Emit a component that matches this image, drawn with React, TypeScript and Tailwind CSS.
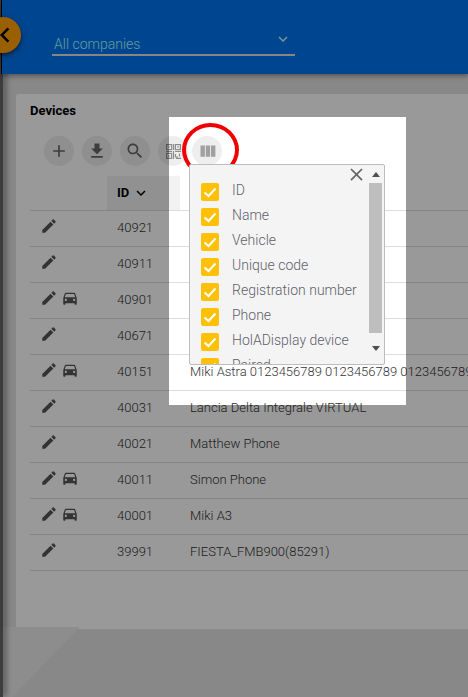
import { FC } from 'react';

interface Device {
  id: number;
  name: string;
  hasCar?: boolean;
}

const devices: Device[] = [
  { id: 40921, name: 'Test' },
  { id: 40911, name: 'Test 2' },
  { id: 40901, name: 'Panda', hasCar: true },
  { id: 40671, name: 'Phone' },
  { id: 40151, name: 'Miki Astra 0123456789 0123456789 0123456789', hasCar: true },
  { id: 40031, name: 'Lancia Delta Integrale VIRTUAL' },
  { id: 40021, name: 'Matthew Phone' },
  { id: 40011, name: 'Simon Phone', hasCar: true },
  { id: 40001, name: 'Miki A3', hasCar: true },
  { id: 39991, name: 'FIESTA_FMB900(85291)' },
];

const columns = ['ID', 'Name', 'Vehicle', 'Unique code', 'Registration number', 'Phone', 'HolADisplay device', 'Paired'];

const Icon: FC<{ d: string; className?: string }> = ({ d, className }) => (
  <svg viewBox="0 0 24 24" fill="currentColor" className={className}>
    <path d={d} />
  </svg>
);

const ICONS = {
  add: 'M19 13h-6v6h-2v-6H5v-2h6V5h2v6h6v2z',
  download: 'M19 9h-4V3H9v6H5l7 7 7-7zM5 18v2h14v-2H5z',
  search:
    'M15.5 14h-.79l-.28-.27C15.41 12.59 16 11.11 16 9.5 16 5.91 13.09 3 9.5 3S3 5.91 3 9.5 5.91 16 9.5 16c1.61 0 3.09-.59 4.23-1.57l.27.28v.79l5 4.99L20.49 19l-4.99-5zm-6 0C7.01 14 5 11.99 5 9.5S7.01 5 9.5 5 14 7.01 14 9.5 11.99 14 9.5 14z',
  column: 'M10 18h5V5h-5v13zm-6 0h5V5H4v13zM16 5v13h5V5h-5z',
  edit: 'M3 17.25V21h3.75L17.81 9.94l-3.75-3.75L3 17.25zM20.71 7.04c.39-.39.39-1.02 0-1.41l-2.34-2.34c-.39-.39-1.02-.39-1.41 0l-1.83 1.83 3.75 3.75 1.83-1.83z',
  car: 'M18.92 6.01C18.72 5.42 18.16 5 17.5 5h-11c-.66 0-1.21.42-1.42 1.01L3 12v8c0 .55.45 1 1 1h1c.55 0 1-.45 1-1v-1h12v1c0 .55.45 1 1 1h1c.55 0 1-.45 1-1v-8l-2.08-5.99zM6.5 16c-.83 0-1.5-.67-1.5-1.5S5.67 13 6.5 13s1.5.67 1.5 1.5S7.33 16 6.5 16zm11 0c-.83 0-1.5-.67-1.5-1.5s.67-1.5 1.5-1.5 1.5.67 1.5 1.5-.67 1.5-1.5 1.5zM5 11l1.5-4.5h11L19 11H5z',
  chevronDown: 'M7.41 8.59L12 13.17l4.59-4.58L18 10l-6 6-6-6 1.41-1.41z',
  chevronLeft: 'M15.41 7.41L14 6l-6 6 6 6 1.41-1.41L10.83 12z',
  close: 'M19 6.41L17.59 5 12 10.59 6.41 5 5 6.41 10.59 12 5 17.59 6.41 19 12 13.41 17.59 19 19 17.59 13.41 12z',
};

const QrIcon = () => (
  <svg viewBox="0 0 15 15" className="w-[15px] h-[15px] text-[#8c8c8c]" fill="none" stroke="currentColor" strokeWidth="1.2">
    <rect x="0.6" y="0.6" width="5" height="5" />
    <rect x="9.4" y="0.6" width="5" height="5" />
    <rect x="0.6" y="9.4" width="5" height="5" />
    <path d="M2 3h2M11 3h2M2 12h2M7.5 0v6M0 7.5h6M7.5 7v8M9 7.5h6M9.5 10v3h2.5M13.5 9.5v3M10 14.4h5" />
  </svg>
);

const ToolButton: FC<{ children: React.ReactNode; className?: string }> = ({ children, className }) => (
  <div className={`w-[30px] h-[30px] rounded-full bg-[#eeeeee] flex items-center justify-center shrink-0 ${className ?? ''}`}>
    {children}
  </div>
);

const ColumnPicker = () => (
  <div className="absolute left-[173px] top-[70px] w-[196px] h-[201px] z-10 flex bg-[#f4f4f4] border border-[#bdbdbd] rounded-[2px] overflow-hidden">
    <div className="relative flex-1 overflow-hidden pt-[18px] pl-[11px]">
      <Icon d={ICONS.close} className="absolute right-[2px] top-[-1px] w-[21px] h-[21px] text-[#666]" />
      <div className="flex flex-col gap-[7px]">
        {columns.map((c) => (
          <div key={c} className="flex items-center h-[18px]">
            <div className="w-[18px] h-[18px] rounded-[2px] bg-[#ffc107] flex items-center justify-center shrink-0">
              <svg viewBox="0 0 18 18" className="w-[18px] h-[18px]" fill="none" stroke="white" strokeWidth="2">
                <path d="M3.5 9.5 7.5 13 14.5 5.5" />
              </svg>
            </div>
            <span className="ml-[13px] -mt-[4px] text-[14px] font-light text-[#5f5f6b] whitespace-nowrap">{c}</span>
          </div>
        ))}
      </div>
    </div>
    <div className="w-[15px] flex flex-col items-center pr-[2px]">
      <div className="h-[18px] flex items-center justify-center">
        <div className="border-x-[4px] border-x-transparent border-b-[5px] border-b-[#505050]" />
      </div>
      <div className="w-full h-[150px] bg-[#bebebe]" />
      <div className="flex-1 flex items-center justify-center">
        <div className="border-x-[4px] border-x-transparent border-t-[5px] border-t-[#505050]" />
      </div>
    </div>
  </div>
);

export default function App() {
  return (
    <div className="relative w-[468px] h-[697px] overflow-hidden bg-[#e3e3e3] font-['Roboto',sans-serif] text-[#333]">
      {/* backdrop shape bottom left */}
      <svg className="absolute left-0 bottom-0 w-[90px] h-[70px]" viewBox="0 0 90 70">
        <path d="M0 70V0H80L12 70z" fill="#ebebeb" />
      </svg>
      <div className="absolute left-0 top-0 bottom-0 w-[3px] bg-[#666] shadow-[2px_0_6px_rgba(0,0,0,0.7)]" />

      <header className="relative h-[74px] bg-[#0073f0] shadow-[0_2px_5px_rgba(0,0,0,0.4)] pt-[33px] pl-[50px] ml-[1px] border-l border-black">
        <div className="w-[243px] h-[23px] border-b-2 border-[#e0e0e0] flex justify-between pl-[2px] pr-[4px] text-[14px] font-light text-[#aaffff] leading-[22px]">
          <span>All companies</span>
          <Icon d={ICONS.chevronDown} className="w-[18px] h-[18px] -mt-[3px] mr-[-1px] text-[#c8f8ff]" />
        </div>
      </header>
      <div className="absolute left-[-15px] top-[17px] w-[36px] h-[36px] rounded-full bg-[#ff9f00] shadow-[0_2px_5px_rgba(0,0,0,0.6)] flex items-center justify-end">
        <Icon d={ICONS.chevronLeft} className="w-[30px] h-[30px] mr-[1px] text-black" />
      </div>

      <main className="pt-[20px] pl-[16px]">
        <section className="h-[535px] bg-white rounded-l-[3px] pt-[9px] pl-[14px]">
          <h1 className="text-[13px] font-bold text-black leading-[16px]">Devices</h1>
          <div className="mt-[17px] pl-[14px] flex">
            <ToolButton><Icon d={ICONS.add} className="w-[20px] h-[20px] text-[#666]" /></ToolButton>
            <ToolButton className="ml-[8px]"><Icon d={ICONS.download} className="w-[20px] h-[20px] text-[#666]" /></ToolButton>
            <ToolButton className="ml-[8px]"><Icon d={ICONS.search} className="w-[20px] h-[20px] text-[#666]" /></ToolButton>
            <ToolButton className="ml-[8px]"><QrIcon /></ToolButton>
            <ToolButton className="ml-[4px]"><Icon d={ICONS.column} className="w-[21px] h-[21px] text-[#a0a0a0]" /></ToolButton>
          </div>

          <div className="mt-[10px] h-[35px] border-b border-[#dddddd] pl-[77px]">
            <div className="w-[73px] h-[34px] bg-[#f2f2f2] flex items-center pl-[10px] text-[13px] font-bold text-black">
              ID
              <Icon d={ICONS.chevronDown} className="w-[18px] h-[18px] ml-[3px]" />
            </div>
          </div>

          {devices.map((d) => (
            <div key={d.id} className="h-[36px] border-b border-[#dddddd] flex items-center whitespace-nowrap text-[13px] font-light">
              <div className="w-[87px] shrink-0 pl-[10px] flex items-center -mt-[6px] gap-[3px] text-[#555]">
                <Icon d={ICONS.edit} className="w-[18px] h-[18px]" />
                {d.hasCar && <Icon d={ICONS.car} className="w-[18px] h-[18px]" />}
              </div>
              <div className="w-[73px] shrink-0 pb-[2px]">{d.id}</div>
              <div className="shrink-0 pb-[2px]">{d.name}</div>
            </div>
          ))}
        </section>
      </main>

      {/* tour spotlight */}
      <div className="absolute left-[169px] top-[117px] w-[237px] h-[288px] shadow-[0_0_0_1000px_rgba(0,0,0,0.4)]" />
      <div className="absolute left-[16px] top-[94px]">
        <ColumnPicker />
      </div>
      <div className="absolute left-[182px] top-[123px] w-[57px] h-[54px] rounded-[50%] border-[4px] border-[#f00000]" />
    </div>
  );
}
